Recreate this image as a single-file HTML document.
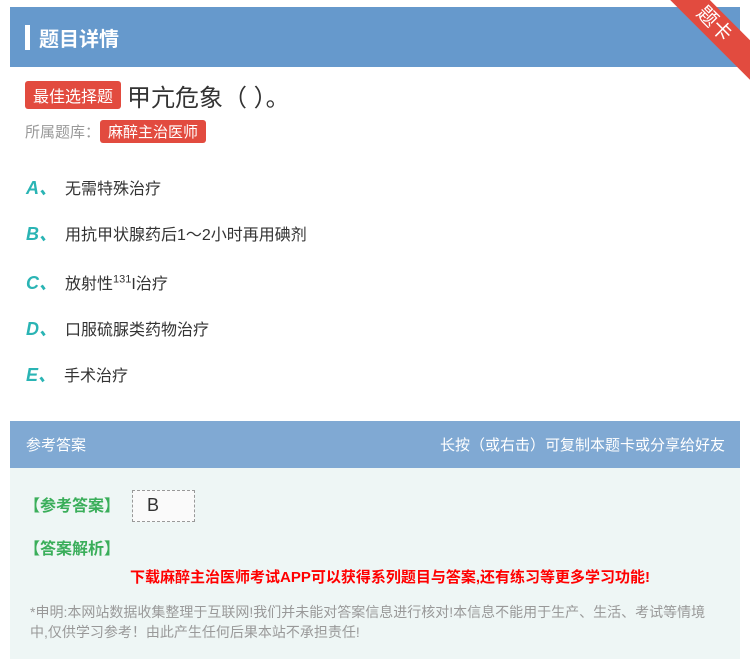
<!DOCTYPE html>
<html><head><meta charset="utf-8"><style>
*{margin:0;padding:0;box-sizing:border-box}
body{width:750px;height:659px;background:#fff;font-family:"Liberation Sans","Noto Sans CJK SC",sans-serif;position:relative;overflow:hidden}
.hd{position:absolute;left:10px;top:7px;width:730px;height:60px;background:#6699cc}
.hd .bar{position:absolute;left:15px;top:18px;width:5px;height:25px;background:#fff}
.hd .t{position:absolute;left:29px;top:16px;color:#fff;font-size:20px;font-weight:bold}
.rib{position:absolute;right:-34px;top:10px;width:140px;height:28px;background:#e24b3f;transform:rotate(45deg);color:#fff;text-align:center;font-size:20px;line-height:28px}
.tag{display:inline-block;background:#e24b3f;color:#fff;border-radius:3px}
.q{position:absolute;left:25px;top:78px;font-size:24px;color:#333}
.q .tag{font-size:16px;padding:2px 8px;vertical-align:4px;margin-right:6px}
.lib{position:absolute;left:25px;top:120px;font-size:15px;color:#999}
.lib .tag{font-size:15px;padding:1px 8px}
.op{position:absolute;left:26px;font-size:16px;color:#333}
.op b{color:#2ab4b4;font-style:italic;font-size:18px;margin-right:8px}
.ah{position:absolute;left:10px;top:421px;width:730px;height:47px;background:#80a9d3;color:#fff;font-size:15px}
.ab{position:absolute;left:10px;top:468px;width:730px;height:191px;background:#eef6f5}
.g{color:#3aae5a;font-weight:bold;font-size:16px;position:absolute}
</style></head><body>
<div class="hd"><div class="bar"></div><div class="t">题目详情</div></div>
<div class="rib">题卡</div>
<div class="q"><span class="tag">最佳选择题</span>甲亢危象（ ）。</div>
<div class="lib">所属题库：<span class="tag">麻醉主治医师</span></div>
<div class="op" style="top:174px"><b>A、</b>无需特殊治疗</div>
<div class="op" style="top:220px"><b>B、</b>用抗甲状腺药后1～2小时再用碘剂</div>
<div class="op" style="top:269px"><b>C、</b>放射性<sup style="font-size:11px">131</sup>I治疗</div>
<div class="op" style="top:315px"><b>D、</b>口服硫脲类药物治疗</div>
<div class="op" style="top:361px"><b>E、</b>手术治疗</div>
<div class="ah"><span style="position:absolute;left:16px;top:13px">参考答案</span><span style="position:absolute;right:15px;top:13px">长按（或右击）可复制本题卡或分享给好友</span></div>
<div class="ab">
<div class="g" style="left:14px;top:24px">【参考答案】</div>
<div style="position:absolute;left:122px;top:22px;width:63px;height:32px;background:#fafafa;border:1px dashed #999;font-size:18px;color:#333;padding:4px 0 0 14px">B</div>
<div class="g" style="left:14px;top:67px">【答案解析】</div>
<div style="position:absolute;left:120px;top:98px;color:#f00;font-weight:bold;font-size:15px">下载麻醉主治医师考试APP可以获得系列题目与答案,还有练习等更多学习功能!</div>
<div style="position:absolute;left:20px;top:134px;width:690px;color:#999;font-size:14px;line-height:20px">*申明:本网站数据收集整理于互联网!我们并未能对答案信息进行核对!本信息不能用于生产、生活、考试等情境中,仅供学习参考！由此产生任何后果本站不承担责任!</div>
</div>
</body></html>
